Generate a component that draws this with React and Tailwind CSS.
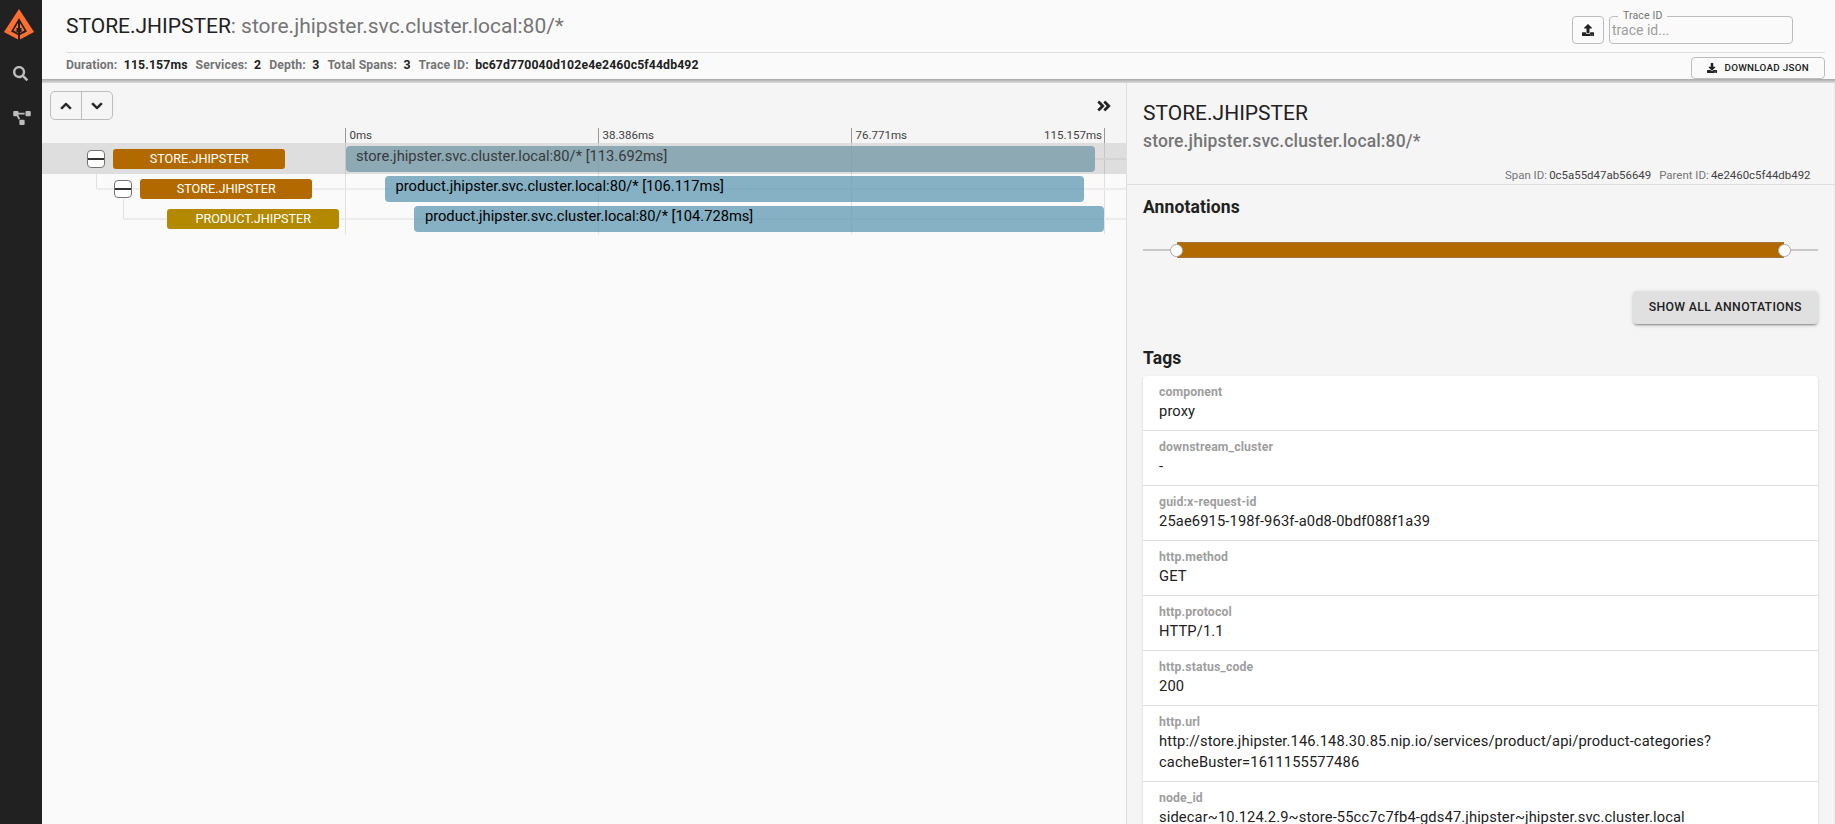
import React from "react";
import {
  FaSearch,
  FaProjectDiagram,
  FaChevronUp,
  FaChevronDown,
  FaAngleDoubleRight,
  FaUpload,
  FaDownload,
} from "react-icons/fa";

const META = [
  ["Duration:", "115.157ms"],
  ["Services:", "2"],
  ["Depth:", "3"],
  ["Total Spans:", "3"],
  ["Trace ID:", "bc67d770040d102e4e2460c5f44db492"],
];

const TAGS = [
  ["component", "proxy"],
  ["downstream_cluster", "-"],
  ["guid:x-request-id", "25ae6915-198f-963f-a0d8-0bdf088f1a39"],
  ["http.method", "GET"],
  ["http.protocol", "HTTP/1.1"],
  ["http.status_code", "200"],
  ["http.url", "http://store.jhipster.146.148.30.85.nip.io/services/product/api/product-categories?cacheBuster=1611155577486"],
  ["node_id", "sidecar~10.124.2.9~store-55cc7c7fb4-gds47.jhipster~jhipster.svc.cluster.local"],
];

function Logo() {
  return (
    <svg className="ml-1 h-[31px] w-[30px] self-start" viewBox="0 0 30 31">
      <path d="M15 0 L30 23 L15 31 L0 23 Z" fill="#ff6f32" />
      <path d="M15 9 L23 22.4 L16 26 V24 L20.4 21.6 L16 14 V31 H14 V14 L9.6 21.6 L14 24 V26 L7 22.4 Z" fill="#212121" />
      <path d="M12.2 19 H14.2 V23.5 L11.4 22 L12.8 21.2 Z M17.8 19 H15.8 V23.5 L18.6 22 L17.2 21.2 Z" fill="#212121" />
    </svg>
  );
}

function Sidebar() {
  return (
    <nav className="flex h-[824px] w-[42px] shrink-0 flex-col items-center bg-[#212121] pt-[9px] text-[#bdbdbd]">
      <Logo />
      <FaSearch className="mt-[26px] mr-[1px] size-[15px]" />
      <FaProjectDiagram className="mt-[30px] ml-[2px] h-[14px] w-[18px]" />
    </nav>
  );
}

function Header() {
  return (
    <header className="h-[79px] bg-[#fafafa] pr-[10px] pl-6">
      <div className="flex h-[53px] items-start justify-between border-b border-[#dedede]">
        <h1 className="mt-[10px] text-[21px] leading-8 tracking-[-0.01px] text-[#212121]">
          STORE.JHIPSTER<span className="text-[#757575]">: store.jhipster.svc.cluster.local:80/*</span>
        </h1>
        <div className="mt-4 mr-[32px] flex gap-[5px]">
          <button className="flex h-7 w-8 items-center justify-center rounded-[4px] border border-[#bdbdbd]">
            <FaUpload className="size-3 text-[#212121]" />
          </button>
          <div className="relative flex h-7 w-[184px] items-center rounded-[4px] border border-[#bdbdbd] pl-[2px]">
            <span className="text-[14px] text-[#9e9e9e]">trace id...</span>
            <span className="absolute -top-2 left-[8px] bg-[#fafafa] px-[5px] text-[10.5px] leading-[14px] tracking-[0.14px] text-[#757575]">Trace ID</span>
          </div>
        </div>
      </div>
      <div className="flex h-[26px] items-start justify-between">
        <div className="flex gap-[8px] pt-[3px] text-[12.25px] leading-[18px] font-bold tracking-[0.125px]">
          {META.map(([k, v]) => (
            <div key={k} className="flex gap-[6.4px]">
              <span className="text-[#757575]">{k}</span>
              <span className="text-[#212121]">{v}</span>
            </div>
          ))}
        </div>
        <button className="mt-1 flex h-[22px] w-[134px] items-center rounded-[4px] border border-[#bdbdbd] pl-[15px] text-[9.8px] font-medium tracking-[0.28px] text-[#212121]">
          <FaDownload className="mr-[7.5px] size-[10px]" />
          DOWNLOAD JSON
        </button>
      </div>
    </header>
  );
}

const SPANS = [
  {
    service: "STORE.JHIPSTER",
    label: "store.jhipster.svc.cluster.local:80/* [113.692ms]",
    badge: "bg-[#b26a00]",
    bar: "ml-0 w-[749px] bg-[#7197a5]/75 text-[#37393a]",
    toggle: "ml-[45px]",
    line: "bg-[#d3d3d3] left-[1050px]",
  },
  {
    service: "STORE.JHIPSTER",
    label: "product.jhipster.svc.cluster.local:80/* [106.117ms]",
    badge: "bg-[#b26a00]",
    bar: "ml-[39.5px] w-[699px] bg-[#5f97b0]/75 text-black",
    toggle: "ml-[72px]",
    line: "bg-[#ececec] left-[54px]",
  },
  {
    service: "PRODUCT.JHIPSTER",
    label: "product.jhipster.svc.cluster.local:80/* [104.728ms]",
    badge: "ml-[124.6px] bg-[#b28900]",
    bar: "ml-[68.9px] w-[690px] bg-[#5f97b0]/75 text-black",
    toggle: null,
    line: "bg-[#ececec] left-[81px]",
  },
];

function Minus({ pos }) {
  return (
    <span className={`${pos} mt-[1px] mr-[7.6px] flex h-[18px] w-[18px] shrink-0 items-center rounded-[4px] border border-[#757575] bg-white`}>
      <span className="h-[2px] w-full bg-[#333]" />
    </span>
  );
}

function Row({ s, first }) {
  return (
    <div className={`relative flex ${first ? "h-[31px]" : "h-[30px]"}`}>
      <span className={`absolute right-0 h-[2px] ${first ? "top-[15px]" : "top-[14px]"} ${s.line}`} />
      <div className={`relative flex w-[303.5px] shrink-0 items-start ${first ? "pt-[6px]" : "pt-[5px]"}`}>
        {s.toggle && <Minus pos={s.toggle} />}
        <span className={`flex h-5 w-[172.8px] shrink-0 items-center justify-center rounded-[3px] pl-[0.5px] text-[12.6px] text-white ${s.badge}`}>{s.service}</span>
      </div>
      <div className={`relative h-[26px] rounded-[4px] pl-[10.5px] text-[14.7px] leading-5 whitespace-nowrap ${first ? "mt-[3px]" : "mt-[2px]"} ${s.bar}`}>{s.label}</div>
    </div>
  );
}

const TICKS = [
  ["0ms", "left-[303px]"],
  ["38.386ms", "left-[556px]"],
  ["76.771ms", "left-[809px]"],
];

function Timeline() {
  return (
    <section className="flex w-[1084px] shrink-0 flex-col bg-[#fafafa]">
      <div className="relative h-[60px] bg-[#f5f5f5]">
        <div className="flex items-start justify-between pt-2 pr-[14px] pl-2">
          <div className="flex h-[29px] w-[63px] rounded-[5px] border border-[#bdbdbd] text-[#212121]">
            <span className="flex flex-1 items-center justify-center border-r border-[#bdbdbd]"><FaChevronUp className="size-3" stroke="currentColor" strokeWidth="30" /></span>
            <span className="flex flex-1 items-center justify-center"><FaChevronDown className="size-3" stroke="currentColor" strokeWidth="30" /></span>
          </div>
          <FaAngleDoubleRight className="mt-[6.5px] size-4 text-[#212121]" stroke="currentColor" strokeWidth="12" />
        </div>
        {TICKS.map(([t, p]) => (
          <span key={t} className={`absolute top-[45px] h-[15px] border-l border-[#999] pl-[3.5px] text-[11.55px] leading-[15px] text-[#424242] ${p}`}>{t}</span>
        ))}
        <span className="absolute top-[45px] right-[21px] h-[15px] border-r border-[#999] pr-[2px] text-[11.55px] leading-[15px] text-[#424242]">115.157ms</span>
      </div>
      <div className="relative">
        <span className="absolute top-0 left-0 h-[31px] w-full bg-[#dedede]" />
        {["left-[303px]", "left-[556px]", "left-[809px]", "left-[1062px]"].map((p) => (
          <span key={p} className={`absolute top-0 h-[91px] w-px bg-black/10 ${p}`} />
        ))}
        <span className="absolute top-[31px] left-[54px] h-[16px] w-px bg-[#e0e0e0]" />
        <span className="absolute top-[56px] left-[81px] h-[21px] w-px bg-[#e0e0e0]" />
        {SPANS.map((s, i) => <Row key={i} s={s} first={i === 0} />)}
      </div>
    </section>
  );
}

function Detail() {
  return (
    <aside className="min-w-0 flex-1 overflow-hidden border-x border-l-[#dedede] border-r-[#e8e8e8] bg-[#f5f5f5] text-[#212121]">
      <div className="h-[102px] border-b border-[#dedede] pl-4">
        <h2 className="pt-[14px] text-[21px] leading-8">STORE.JHIPSTER</h2>
        <h3 className="text-[17.5px] leading-6 font-medium tracking-[0.131px] text-[#757575]">store.jhipster.svc.cluster.local:80/*</h3>
        <div className="mt-[14px] mr-[23.5px] flex justify-end gap-[8px] text-[11.45px] leading-4 text-[#424242]">
          <span><span className="text-[#757575]">Span ID:</span><span className="ml-[2.2px]">0c5a55d47ab56649</span></span>
          <span><span className="text-[#757575]">Parent ID:</span><span className="ml-[2.2px]">4e2460c5f44db492</span></span>
        </div>
      </div>
      <div className="pr-[16px] pl-4">
        <h4 className="mt-[10px] text-[17.5px] leading-6 font-bold tracking-[0.131px]">Annotations</h4>
        <div className="mt-[23px] flex h-4 items-center">
          <span className="h-[2px] w-[33px] bg-[#c8c8c8]" />
          <span className="-mr-[6px] -ml-[6px] z-10 size-[13px] rounded-full border border-[#a8a8a8] bg-white" />
          <span className="h-4 flex-1 border-y border-[#a4743a] bg-[#b26a00]" />
          <span className="-mr-[6px] -ml-[6px] z-10 size-[13px] rounded-full border border-[#a8a8a8] bg-white" />
          <span className="h-[2px] w-[33.5px] bg-[#c8c8c8]" />
        </div>
        <div className="mt-[33px] flex justify-end">
          <button className="h-[33px] w-[185.5px] rounded-[4px] bg-[#e0e0e0] text-[12.25px] font-medium tracking-[0.35px] shadow-[0_3px_1px_-2px_rgba(0,0,0,0.2),0_2px_2px_0_rgba(0,0,0,0.14),0_1px_5px_0_rgba(0,0,0,0.12)]">SHOW ALL ANNOTATIONS</button>
        </div>
        <h4 className="mt-[22px] text-[17.5px] leading-6 font-bold tracking-[0.131px]">Tags</h4>
        <div className="mt-[6px] rounded-t-[4px] bg-white shadow-[0_2px_1px_-1px_rgba(0,0,0,0.2),0_1px_1px_0_rgba(0,0,0,0.14),0_1px_3px_0_rgba(0,0,0,0.12)]">
          {TAGS.map(([k, v]) => (
            <div key={k} className="border-b border-[#dedede] px-4 pt-[7px] pb-[8px]">
              <div className="text-[12.25px] leading-[18px] font-bold tracking-[0.131px] text-[#9e9e9e]">{k}</div>
              <div className="text-[14.7px] leading-[21px] tracking-[0.13px] break-words">{v}</div>
            </div>
          ))}
        </div>
      </div>
    </aside>
  );
}

export default function App() {
  return (
    <div className="flex h-[824px] w-[1835px] overflow-hidden bg-[#fafafa] font-[Roboto,sans-serif]">
      <Sidebar />
      <div className="flex min-w-0 flex-1 flex-col">
        <Header />
        <div className="h-1 bg-linear-to-b from-[#a8a8a8] to-[#dcdcdc]" />
        <main className="flex min-h-0 flex-1">
          <Timeline />
          <Detail />
        </main>
      </div>
    </div>
  );
}
